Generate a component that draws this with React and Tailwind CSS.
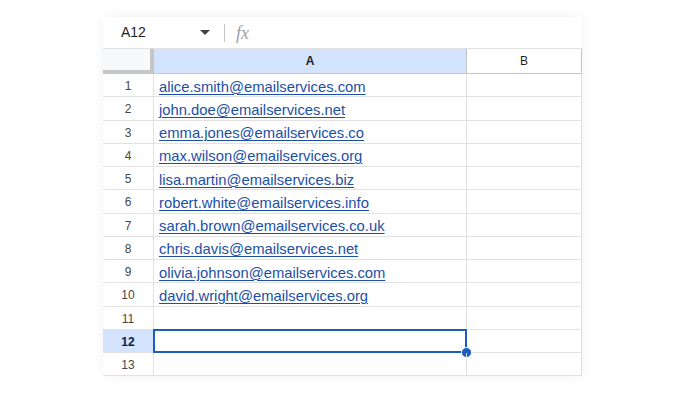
import React from "react";

const emails = [
  "alice.smith@emailservices.com",
  "john.doe@emailservices.net",
  "emma.jones@emailservices.co",
  "max.wilson@emailservices.org",
  "lisa.martin@emailservices.biz",
  "robert.white@emailservices.info",
  "sarah.brown@emailservices.co.uk",
  "chris.davis@emailservices.net",
  "olivia.johnson@emailservices.com",
  "david.wright@emailservices.org",
  "",
  "",
  "",
];

export default function App() {
  return (
    <div className="w-[688px] h-[400px] bg-white overflow-hidden" style={{ fontFamily: "'Liberation Sans', Arial, sans-serif" }}>
      <div className="pt-[17px] pl-[103px]">
        <div className="w-[479px] shadow-[0_0_12px_rgba(0,0,0,0.06)]">
          {/* formula bar */}
          <div className="h-[31px] flex items-center bg-white">
            <div className="w-[92px] pl-[18px] text-[14px] text-[#1f1f1f]">A12</div>
            <svg width="10" height="6" viewBox="0 0 10 6" className="ml-[5px]">
              <path d="M0 0 L10 0 L5 5 Z" fill="#444" />
            </svg>
            <div className="ml-[14px] w-px h-[18px] bg-[#c7c7c7]" />
            <div className="ml-[11px] text-[18px] italic text-[#9aa0a6] leading-none" style={{ fontFamily: "'Liberation Serif', serif" }}>fx</div>
          </div>
          {/* header */}
          <div className="flex h-[26px] border-t border-[#e1e1e1]">
            <div className="w-[51px] bg-[#f8f9fa] border-r-[4px] border-b-[4px] border-[#c4c7c5] box-border" />
            <div className="w-[313px] bg-[#d3e3fd] border-b border-r border-[#c4c7c5] flex items-center justify-center text-[12px] font-bold text-[#1f1f1f]">A</div>
            <div className="w-[115px] bg-white border-b border-r border-[#c4c7c5] flex items-center justify-center text-[12px] text-[#1f1f1f]">B</div>
          </div>
          {emails.map((e, i) => {
            const sel = i === 11;
            return (
              <div key={i} className="flex h-[23.25px]">
                <div className={`w-[51px] pt-[2px] border-r border-b border-[#e1e1e1] flex items-center justify-center text-[12px] ${sel ? "bg-[#d3e3fd] font-bold text-[#0b1f44]" : "bg-white text-[#444746]"}`}>{i + 1}</div>
                <div className="relative w-[313px] pt-[3px] border-r border-b border-[#e1e1e1] flex items-center pl-[5px]">
                  {e && (
                    <span className="text-[14.8px] text-[#1c4fa6] underline underline-offset-[2px] decoration-[1px]">{e}</span>
                  )}
                  {sel && (
                    <>
                      <div className="absolute -left-px -top-px -right-px -bottom-px border-2 border-[#1f5cc0]" />
                      <div className="absolute -right-[6px] -bottom-[6px] w-[11px] h-[11px] rounded-full bg-[#1f5cc0] border border-white" />
                    </>
                  )}
                </div>
                <div className="w-[115px] border-r border-b border-[#e1e1e1]" />
              </div>
            );
          })}
        </div>
      </div>
    </div>
  );
}
